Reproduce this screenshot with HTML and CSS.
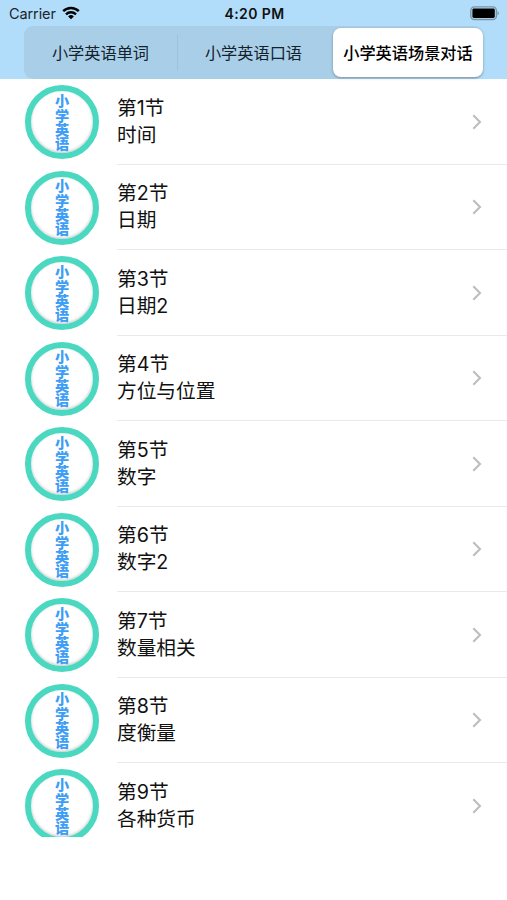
FILE: index.html
```html
<!DOCTYPE html>
<html lang="zh-CN">
<head>
    <meta charset="UTF-8">
    <meta name="viewport" content="width=device-width, initial-scale=1.0">
    <title>小学英语场景对话</title>
    <link rel="stylesheet" href="styles.css">
</head>
<body>
    <header class="header">
        <div class="status-bar">
            <div class="carrier">
                <span>Carrier</span>
                <svg class="wifi" viewBox="0 0 18 14" width="18" height="14">
                    <path d="M1.2 5.2a11.2 11.2 0 0 1 15.6 0M4 8.3a7.2 7.2 0 0 1 10 0" fill="none" stroke="#000" stroke-width="2.4"/>
                    <path d="M9 13.3L6.1 10.4a4.2 4.2 0 0 1 5.8 0z"/>
                </svg>
            </div>
            <div class="time">4:20 PM</div>
            <div class="battery">
                <svg viewBox="0 0 30 15" width="30" height="15">
                    <rect x="0.8" y="0.9" width="25.6" height="12.6" rx="3.6" fill="none" stroke="#7795a6" stroke-width="1.4"/>
                    <rect x="2.4" y="2.5" width="22.4" height="9.4" rx="1.4"/>
                    <path d="M27.6 5q2.600 2.200 0 4.400z" fill="#7795a6"/>
                </svg>
            </div>
        </div>
        <div class="tabs">
            <div class="tab">小学英语单词</div>
            <div class="tab divided">小学英语口语</div>
            <div class="tab active">小学英语场景对话</div>
        </div>
    </header>

    <main class="list" id="list"></main>

    <script>
        const lessons = ['时间', '日期', '日期2', '方位与位置', '数字', '数字2', '数量相关', '度衡量', '各种货币'];
        const list = document.getElementById('list');

        lessons.forEach((name, i) => {
            const row = document.createElement('div');
            row.className = 'row';
            row.innerHTML = `
                <div class="badge">小学英语</div>
                <div class="cell">
                    <div class="label">第${i + 1}节<br>${name}</div>
                    <svg class="chevron" viewBox="0 0 10 16" width="10" height="16">
                        <path d="M1.3 1.3L8 8l-6.700 6.700" fill="none" stroke="#bdbdbf" stroke-width="2.1"/>
                    </svg>
                </div>`;
            list.appendChild(row);
        });
    </script>
</body>
</html>
```
FILE: styles.css
```css
* {
    box-sizing: border-box;
}
body {
    margin: 0;
    background: #fff;
    color: #111;
    font-family: Inter, "Noto Sans CJK SC", sans-serif;
    overflow: hidden;
}
.header {
    height: 79.4px;
    background: #b1ddfa;
}
.status-bar {
    display: grid;
    grid-template-columns: 1fr auto 1fr;
    align-items: center;
    height: 26px;
    padding: 1px 7px 0 9px;
    font-size: 14.5px;
}
.carrier {
    display: flex;
    align-items: center;
    gap: 6px;
    color: #1c252b;
}
.carrier span {
    letter-spacing: -0.1px;
}
.wifi {
    margin-top: -2px;
}
.time {
    font-size: 14px;
    font-weight: 600;
    letter-spacing: 0.4px;
}
.battery {
    display: flex;
    justify-content: flex-end;
}
.tabs {
    display: grid;
    grid-template-columns: repeat(3, 1fr);
    height: 53px;
    margin: 0 24px;
    padding: 2px 0;
    background: #a9cfe8;
    border-radius: 9px;
}
.tab {
    position: relative;
    display: flex;
    align-items: center;
    justify-content: center;
    padding-bottom: 2px;
    font-size: 16.200px;
    color: #14222c;
    white-space: nowrap;
}
.divided::before {
    content: "";
    position: absolute;
    left: 0;
    top: 7px;
    width: 1px;
    height: 36px;
    background: #9cc2dc;
}
.active {
    margin-left: 3px;
    background: #fff;
    border-radius: 8px;
    color: #000;
    font-weight: 500;
    box-shadow: 0 1px 3px rgba(0, 0, 0, 0.3);
}
.list {
    height: 758px;
    overflow: hidden;
}
.row {
    display: flex;
    align-items: center;
    height: 85.5px;
    padding-left: 25px;
}
.badge {
    display: flex;
    align-items: center;
    justify-content: center;
    width: 74px;
    height: 74px;
    padding-right: 2px;
    border: 6px solid #4bd8c1;
    border-radius: 50%;
    box-shadow: inset 0 -1px 3px rgba(0, 0, 0, 0.22);
    color: #3e9df5;
    font-size: 14.200px;
    font-weight: 900;
    writing-mode: vertical-rl;
}
.cell {
    display: flex;
    flex: 1;
    align-items: center;
    justify-content: space-between;
    height: 100%;
    margin-left: 18px;
    padding-right: 25px;
    border-bottom: 1.5px solid #e9e9ea;
}
.label {
    font-size: 19.700px;
    line-height: 27px;
}
```
